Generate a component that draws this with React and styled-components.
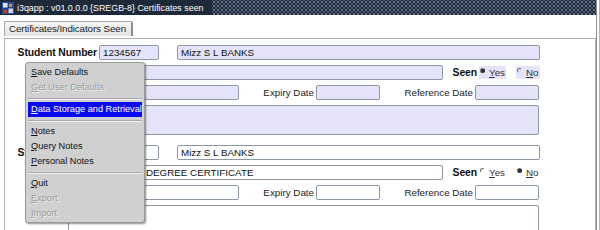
import React from 'react';
import styled, { createGlobalStyle } from 'styled-components';

const GlobalStyle = createGlobalStyle`
  html, body {
    margin: 0;
    padding: 0;
    background: #e6e6e6;
    font-family: "Liberation Sans", Arial, sans-serif;
  }
`;

const Window = styled.div`
  position: relative;
  width: 596px;
  height: 230px;
  overflow: hidden;
  background: #ffffff;
  border-right: 1px solid #8c8c8c;
  box-shadow: 2px 0 0 #ffffff, 3px 0 0 #b4b4b4;
`;

const TitleBar = styled.div`
  display: flex;
  align-items: center;
  height: 15px;
  background-color: #1e2a39;
  background-image:
    radial-gradient(circle, #66768c 0.7px, transparent 1px),
    radial-gradient(circle, #4a5a70 0.7px, transparent 1px);
  background-size: 4px 4px, 4px 4px;
  background-position: 0 0, 2px 2px;
`;

const TitleText = styled.div`
  display: flex;
  align-items: center;
  gap: 3px;
  height: 100%;
  padding: 0 8px 0 2px;
  background: #1e2a39;
  color: #ffffff;
  font-size: 8.9px;
  white-space: nowrap;
`;

const Body = styled.div`
  padding: 3px 0 0 4px;
`;

const Tab = styled.div`
  display: inline-block;
  height: 14px;
  line-height: 14px;
  padding: 0 5px 0 4px;
  background: linear-gradient(#f6f6f6, #e4e4e4);
  border: 1px solid #a8a8a8;
  border-bottom: none;
  border-right: 2px solid #8e8e8e;
  border-radius: 2px 2px 0 0;
  font-size: 9.8px;
  color: #1a1a1a;
  letter-spacing: -0.1px;
`;

const Panel = styled.div`
  margin-top: 2px;
  height: 200px;
  border: 1px solid #b0b0b0;
  border-bottom: none;
  padding: 6px 0 0 0;
  display: flex;
  flex-direction: column;
  gap: 10px;
`;

const Record = styled.div`
  display: flex;
  flex-direction: column;
  gap: 5px;
`;

const Row = styled.div`
  display: flex;
  align-items: center;
  height: ${({ $h }) => $h || 15}px;
  padding-left: ${({ $indent }) => $indent || 0}px;
`;

const BoldLabel = styled.span`
  width: ${({ $w }) => $w}px;
  margin-left: ${({ $ml }) => $ml || 0}px;
  padding-right: 2px;
  text-align: right;
  font-size: 10.4px;
  font-weight: bold;
  color: #111111;
  white-space: nowrap;
  letter-spacing: -0.1px;
`;

const Label = styled.span`
  width: ${({ $w }) => $w}px;
  padding-right: 2px;
  text-align: right;
  font-size: 9.8px;
  color: #222222;
  white-space: nowrap;
`;

const Field = styled.div`
  box-sizing: border-box;
  width: ${({ $w }) => $w}px;
  height: ${({ $h }) => $h || 15}px;
  margin-left: ${({ $ml }) => $ml || 0}px;
  padding: 0 3px 0 ${({ $pl }) => $pl || 3}px;
  line-height: 13px;
  border: 1px solid #8c98a6;
  border-radius: 2px;
  background: ${({ $active }) => ($active ? '#e5e3f8' : '#ffffff')};
  font-size: 9.8px;
  color: #111111;
  white-space: nowrap;
  overflow: hidden;
`;

const Choice = styled.span`
  display: inline-flex;
  align-items: center;
  gap: 4px;
  height: 13px;
  margin-left: ${({ $ml }) => $ml || 0}px;
  padding: 0 1px;
  background: ${({ $active }) => ($active ? '#e5e3f8' : 'transparent')};
  font-size: 9.8px;
  color: #333333;
`;

const Radio = styled.span`
  box-sizing: border-box;
  width: 5px;
  height: 5px;
  margin-top: -5px;
  border-radius: 50%;
  border-top: 1px solid #6e6e6e;
  border-left: 1px solid #6e6e6e;
  border-right: 1px solid transparent;
  border-bottom: 1px solid transparent;
  background: ${({ $on }) => ($on ? '#2a2a2a' : 'transparent')};
`;

const U = styled.span`
  text-decoration: underline;
`;

const Menu = styled.div`
  position: absolute;
  left: 25px;
  top: 62px;
  width: 118px;
  padding: 2px 0 1px;
  background: #d0d0d0;
  border: 1px solid #9a9a9a;
  border-radius: 3px;
  box-shadow: 1px 1px 2px rgba(0, 0, 0, 0.45);
  display: flex;
  flex-direction: column;
`;

const MenuItem = styled.div`
  height: 15px;
  line-height: 15px;
  margin: 0 2px;
  padding-left: 3px;
  font-size: 9.2px;
  white-space: nowrap;
  color: ${({ $disabled, $selected }) => ($selected ? '#ffffff' : $disabled ? '#9c9c9c' : '#111111')};
  background: ${({ $selected }) => ($selected ? '#0a0af0' : 'transparent')};
  text-shadow: ${({ $disabled }) => ($disabled ? '1px 1px 0 #ececec' : 'none')};
`;

const Separator = styled.div`
  height: 7px;
  display: flex;
  align-items: center;
  margin: 0 2px;
  &::after {
    content: '';
    flex: 1;
    height: 1px;
    background: #a9a9a9;
    box-shadow: 0 1px 0 #f2f2f2;
  }
`;

const AppIcon = () => (
  <svg width="12" height="12" viewBox="0 0 12 12">
    <rect x="0" y="0" width="12" height="12" fill="#2a4f9e" />
    <rect x="1" y="1" width="5" height="5" fill="#d8e4f6" />
    <rect x="6" y="6" width="5" height="5" fill="#c8d6ee" />
    <path d="M2 8 L5 8 L5 11 L2 11 Z" fill="#d23a2a" />
    <path d="M7 2 L10 2 L10 5 L7 5 Z" fill="#e88a2a" />
    <path d="M1 6 L11 6 M6 1 L6 11" stroke="#0d2660" strokeWidth="0.8" />
  </svg>
);

const SeenChoice = ({ yes, active }) => (
  <>
    <BoldLabel $w={27} $ml={7}>Seen</BoldLabel>
    <Choice $active={active}>
      <Radio $on={yes} />
      <span><U>Y</U>es</span>
    </Choice>
    <Choice $active={active} $ml={10}>
      <Radio $on={!yes} />
      <span><U>N</U>o</span>
    </Choice>
  </>
);

const CertificateRecord = ({ active, number, name, certificate, seen }) => (
  <Record>
    <Row>
      <BoldLabel $w={92}>Student Number</BoldLabel>
      <Field $w={60} $active={active}>{number}</Field>
      <Field $w={363} $ml={18} $active={active}>{name}</Field>
    </Row>
    <Row $indent={63}>
      <Field $w={68} $active={active} />
      <Field $w={305} $ml={2} $pl={7} $active={active}>{certificate}</Field>
      <SeenChoice yes={seen} active={active} />
    </Row>
    <Row $indent={63}>
      <Field $w={171} $active={active} />
      <Label $w={75}>Expiry Date</Label>
      <Field $w={64} $active={active} />
      <Label $w={93}>Reference Date</Label>
      <Field $w={64} $active={active} />
    </Row>
    <Row $indent={63} $h={30}>
      <Field $w={471} $h={30} $active={active} />
    </Row>
  </Record>
);

const menu = [
  { label: 'Save Defaults' },
  { label: 'Get User Defaults', disabled: true },
  'sep',
  { label: 'Data Storage and Retrieval', selected: true },
  'sep',
  { label: 'Notes' },
  { label: 'Query Notes' },
  { label: 'Personal Notes' },
  'sep',
  { label: 'Quit' },
  { label: 'Export', disabled: true },
  { label: 'Import', disabled: true },
];

const App = () => (
  <>
    <GlobalStyle />
    <Window>
      <TitleBar>
        <TitleText>
          <AppIcon />
          i3qapp : v01.0.0.0 {'{SREGB-8}'} Certificates seen
        </TitleText>
      </TitleBar>
      <Body>
        <Tab>Certificates/Indicators Seen</Tab>
        <Panel>
          <CertificateRecord active number="1234567" name="Mizz S L BANKS" seen />
          <CertificateRecord number="" name="Mizz S L BANKS" certificate="DEGREE CERTIFICATE" seen={false} />
        </Panel>
      </Body>
      <Menu>
        {menu.map((item, i) =>
          item === 'sep' ? (
            <Separator key={i} />
          ) : (
            <MenuItem key={i} $disabled={item.disabled} $selected={item.selected}>
              <U>{item.label[0]}</U>
              {item.label.slice(1)}
            </MenuItem>
          )
        )}
      </Menu>
    </Window>
  </>
);

export default App;
